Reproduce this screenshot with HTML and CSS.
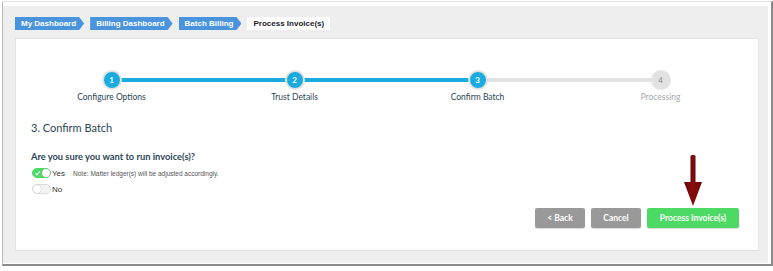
FILE: index.html
```html
<!DOCTYPE html>
<html lang="en">
    <head>
        <meta charset="UTF-8" />
        <meta name="viewport" content="width=device-width, initial-scale=1.0" />
        <title>Process Invoice(s)</title>
        <link rel="stylesheet" href="styles.css">
    </head>
    <body>
        <div class="frame">
            <div class="page">
                <nav class="crumbs">
                    <a class="crumb">My Dashboard</a>
                    <a class="crumb">Billing Dashboard</a>
                    <a class="crumb">Batch Billing</a>
                    <span class="crumb current">Process Invoice(s)</span>
                </nav>
                <div class="panel">
                    <ol class="steps">
                        <li class="step done"><span class="dot">1</span><span class="step-label">Configure Options</span></li>
                        <li class="step done"><span class="dot">2</span><span class="step-label">Trust Details</span></li>
                        <li class="step done"><span class="dot">3</span><span class="step-label">Confirm Batch</span></li>
                        <li class="step"><span class="dot">4</span><span class="step-label">Processing</span></li>
                    </ol>
                    <h2 class="section-title">3. Confirm Batch</h2>
                    <p class="question">Are you sure you want to run invoice(s)?</p>
                    <div class="option">
                        <span class="toggle on"></span>
                        <span class="option-label">Yes</span>
                        <span class="note">Note: Matter ledger(s) will be adjusted accordingly.</span>
                    </div>
                    <div class="option">
                        <span class="toggle"></span>
                        <span class="option-label">No</span>
                    </div>
                    <div class="actions">
                        <button type="button" class="btn btn-gray">&lt; Back</button>
                        <button type="button" class="btn btn-gray">Cancel</button>
                        <button type="button" class="btn btn-green">Process Invoice(s)</button>
                    </div>
                    <svg class="pointer" width="20" height="52" viewBox="0 0 20 52">
                        <defs>
                            <linearGradient id="shade" x1="0" x2="1" y1="0" y2="0">
                                <stop offset="0" stop-color="#5e0606" />
                                <stop offset="0.45" stop-color="#8a0d0d" />
                                <stop offset="1" stop-color="#6a0808" />
                            </linearGradient>
                        </defs>
                        <rect x="7.5" y="0" width="5" height="29" rx="1.5" fill="url(#shade)" />
                        <polygon points="1,27 19,27 10,51" fill="url(#shade)" />
                    </svg>
                </div>
            </div>
        </div>
    </body>
</html>
```

FILE: styles.css
```css
* {
    box-sizing: border-box;
    padding: 0;
    margin: 0;
}

body {
    background-color: #ffffff;
    font-family: "Lato", sans-serif;
    color: #2b4656;
    width: 773px;
    height: 271px;
    overflow: hidden;
}

.frame {
    margin: 1px 0 0 2px;
    width: 771px;
    height: 265px;
    border-top: 1px solid #e2e2e2;
    border-left: 1px solid #b8b8b8;
    border-right: 2px solid #8a8a8a;
    border-bottom: 2px solid #8a8a8a;
    padding: 4px 3px 1px 0;
    background-color: #ffffff;
}

.page {
    background-color: #eeeeee;
    height: 100%;
    padding: 11px 9px 0 12px;
    display: flex;
    flex-direction: column;
    gap: 8px;
}

.crumbs {
    display: flex;
    gap: 6px;
    height: 13px;
}
.crumb {
    font-family: "Liberation Sans", Arial, sans-serif;
    font-size: 8px;
    font-weight: bold;
    line-height: 13px;
    color: #ffffff;
    background-color: #4a94de;
    padding: 0 8px 0 6px;
    clip-path: polygon(0 0, calc(100% - 5px) 0, 100% 50%, calc(100% - 5px) 100%, 0 100%);
    white-space: nowrap;
}
.crumb.current {
    background-color: #ffffff;
    color: #222222;
    padding: 0 6px;
    clip-path: none;
}

.panel {
    position: relative;
    background-color: #ffffff;
    border: 1px solid #e4e4e4;
    height: 213px;
    padding: 0 19px 0 15px;
    display: flex;
    flex-direction: column;
}

.steps {
    list-style: none;
    display: flex;
    margin: 31px 0 0 -11px;
}
.step {
    position: relative;
    flex: none;
    width: 183px;
    display: flex;
    flex-direction: column;
    align-items: center;
}
.step + .step::before {
    content: "";
    position: absolute;
    top: 8px;
    left: -50%;
    width: 100%;
    height: 4px;
    background-color: #e2e2e2;
}
.step.done + .step.done::before {
    background-color: #1aabe0;
}
.dot {
    position: relative;
    z-index: 1;
    width: 20px;
    height: 20px;
    border-radius: 50%;
    border: 2px solid #e3e3e3;
    background-color: #1aabe0;
    color: #ffffff;
    font-size: 8px;
    font-weight: bold;
    line-height: 16px;
    text-align: center;
}
.step:not(.done) .dot {
    background-color: #e2e2e2;
    color: #8a8a8a;
    font-weight: normal;
}
.step-label {
    font-size: 8.5px;
    line-height: 12px;
    margin-top: 1px;
    color: #2b4656;
    white-space: nowrap;
}
.step:not(.done) .step-label {
    color: #a9a9a9;
}

.section-title {
    font-size: 11px;
    font-weight: normal;
    line-height: 16px;
    margin-top: 17px;
    color: #2b4656;
}

.question {
    font-size: 9.3px;
    font-weight: bold;
    line-height: 14px;
    margin-top: 14px;
    color: #2b4656;
}

.option {
    display: flex;
    align-items: center;
    height: 16px;
    margin-top: 1px;
}
.option + .option {
    margin-top: 0;
}
.toggle {
    position: relative;
    width: 19px;
    height: 10px;
    border-radius: 5px;
    background-color: #f4f4f4;
    border: 1px solid #dcdcdc;
    margin-left: 1px;
}
.toggle::after {
    content: "";
    position: absolute;
    top: 0;
    left: 0;
    width: 8px;
    height: 8px;
    border-radius: 50%;
    background-color: #ffffff;
    box-shadow: 0 0 1px #999999;
}
.toggle.on {
    background-color: #4cd964;
    border-color: #4cd964;
}
.toggle.on::after {
    left: auto;
    right: 0;
}
.toggle.on::before {
    content: "";
    position: absolute;
    top: 1px;
    left: 3px;
    width: 2px;
    height: 4px;
    border-right: 1.5px solid #ffffff;
    border-bottom: 1.5px solid #ffffff;
    transform: rotate(40deg);
}
.option-label {
    font-family: "Liberation Sans", Arial, sans-serif;
    font-size: 8px;
    color: #333333;
    margin-left: 1px;
}
.note {
    font-family: "Liberation Sans", Arial, sans-serif;
    font-size: 6.5px;
    color: #555555;
    margin-left: 8px;
}

.actions {
    display: flex;
    justify-content: flex-end;
    gap: 6px;
    margin-top: 11px;
}
.btn {
    border: none;
    border-radius: 2px;
    height: 20px;
    color: #ffffff;
    font-family: "Lato", sans-serif;
    font-size: 8.5px;
    font-weight: bold;
    box-shadow: 0 1px 1px rgba(0, 0, 0, 0.15);
}
.btn-gray {
    background-color: #999999;
    width: 50px;
}
.btn-green {
    background-color: #4cd964;
    width: 92px;
}

.pointer {
    position: absolute;
    left: 667px;
    top: 116px;
}
```
